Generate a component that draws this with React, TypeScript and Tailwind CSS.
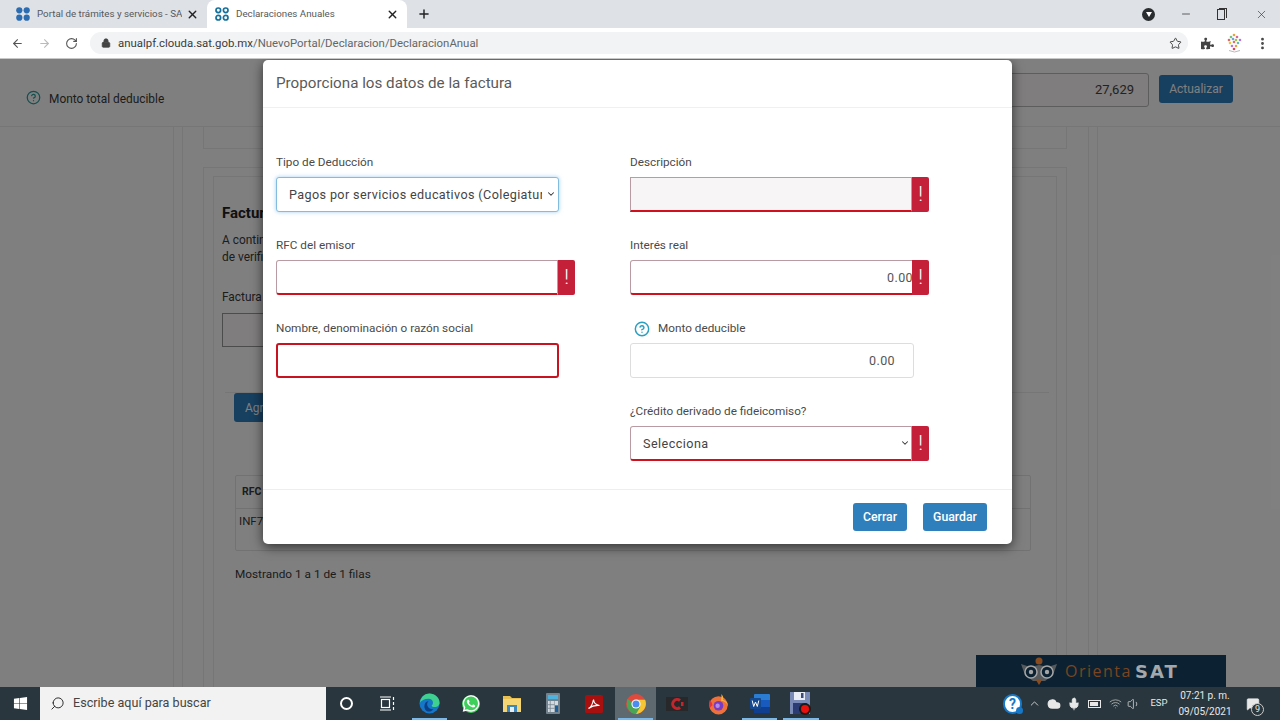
import React from 'react';
import {
  ArrowLeft,
  ArrowRight,
  ChevronDown,
  ChevronUp,
  CircleHelp,
  Cloud,
  Lock,
  MessageSquare,
  Mic,
  Minus,
  MoreVertical,
  Plus,
  RotateCw,
  Search,
  Star,
  Volume1,
  Wifi,
  X,
} from 'lucide-react';
import { FaPuzzlePiece, FaWhatsapp, FaWindows } from 'react-icons/fa';

const SatFavicon = ({ ring }: { ring?: boolean }) => (
  <svg width="14" height="14" viewBox="0 0 14 14">
    {[3.3, 10.7].map((cx) =>
      [3.3, 10.7].map((cy) => (
        <circle
          key={`${cx}-${cy}`}
          cx={cx}
          cy={cy}
          r={ring ? 2.3 : 3.1}
          fill={ring ? 'none' : '#2c6cb0'}
          stroke={ring ? '#16709c' : 'none'}
          strokeWidth={ring ? 1.7 : 0}
        />
      )),
    )}
  </svg>
);

const EdgeIcon = () => (
  <svg width="21" height="21" viewBox="0 0 24 24">
    <circle cx="12" cy="12" r="11.5" fill="#1676c8" />
    <path d="M1 11C2 4 7 .5 12 .5c6 0 11.5 4.5 11.5 10.5 0 3-2.5 5-5.500 5-2 0-3.500-.7-3.500-1.500 0-1 1.500-1.300 1.500-3.500C16 8 13.500 6.500 11 6.500 6 6.500 2.500 9 1 11z" fill="#3fcf8e" />
    <path d="M10 21c-3-1-4.500-4.500-3.500-8 .6-2 2.500-3.500 4.500-3.800-1.500 1.500-2 3-1.500 5 .7 3 4 4.800 7 4.300-2 2.300-4.500 3.300-6.500 2.500z" fill="#0b3f86" />
  </svg>
);

const FolderIcon = () => (
  <svg width="20" height="19" viewBox="0 0 20 19">
    <path d="M1 2h7l2 2h9v14H1z" fill="#e9c04f" />
    <path d="M1 5h18v13H1z" fill="#f4d774" />
    <rect x="5" y="11" width="10" height="7" fill="#3f88bd" />
    <rect x="8" y="13" width="4" height="5" fill="#e6eef3" />
  </svg>
);

const CalcIcon = () => (
  <svg width="14" height="21" viewBox="0 0 14 21">
    <rect width="14" height="21" rx="1" fill="#73838d" />
    <rect x="2" y="2" width="10" height="4" fill="#4db2dd" />
    <rect x="2" y="8" width="6.500" height="11" fill="#d3dbe0" />
    <path d="M4.200 8v11M2 11.700h6.500M2 15.300h6.500" stroke="#73838d" strokeWidth="0.8" />
    <rect x="9" y="8" width="3" height="4" fill="#d3dbe0" />
    <rect x="9" y="13" width="3" height="6" fill="#1f5f99" />
  </svg>
);

const PdfIcon = () => (
  <svg width="18" height="18" viewBox="0 0 18 18">
    <rect width="18" height="18" rx="1.500" fill="#a80f0f" />
    <path d="M3.500 13.500c2-1 4-4 5-9 .3 3 2.500 5.500 6 6-4-.3-8 .7-11 3z" fill="none" stroke="#fff" strokeWidth="1.200" />
  </svg>
);

const ChromeIcon = () => (
  <svg width="20" height="20" viewBox="0 0 24 24">
    <circle cx="12" cy="12" r="12" fill="#e04a3c" />
    <path d="M12 12 1.600 6 1 12c0 6 5 12 11 12l5-7z" fill="#4aa654" />
    <path d="M12 7h11c1.600 4 1 8-1 11s-6 6-10 6l5-8.500z" fill="#f4c534" />
    <circle cx="12" cy="12" r="5.500" fill="#fff" />
    <circle cx="12" cy="12" r="4.200" fill="#4c8bf0" />
  </svg>
);

const CrapIcon = () => (
  <svg width="24" height="18" viewBox="0 0 24 18">
    <rect x="1" y="2" width="22" height="14" fill="#28282a" />
    <path d="M15 5.500A4.500 4.500 0 1 0 15 12.500" fill="none" stroke="#c2272d" strokeWidth="3" />
    <rect x="16" y="7" width="2.500" height="4" fill="#c2272d" />
  </svg>
);

const FirefoxIcon = () => (
  <svg width="21" height="22" viewBox="0 0 24 25">
    <circle cx="12" cy="14" r="10.500" fill="#f0703a" />
    <path d="M15 1c3 3 3 5 2 7 3 1 6 3 6 7-1-3-3-6-8-6 0-3 1-5 0-8z" fill="#fbb040" />
    <path d="M2 8c-1 3-1 6 0 9l3-3c0-2-1-4-3-6z" fill="#e8313f" />
    <circle cx="12" cy="14.500" r="5.500" fill="#7a3bc4" />
    <circle cx="11" cy="14.500" r="2.500" fill="#b78ae6" />
  </svg>
);

const WordIcon = () => (
  <svg width="20" height="19" viewBox="0 0 20 19">
    <rect x="4" y="0" width="16" height="19" rx="1" fill="#2b7cd3" />
    <rect x="4" y="6" width="16" height="7" fill="#185abd" />
    <rect x="4" y="13" width="16" height="6" fill="#103f91" />
    <rect x="0" y="4" width="11" height="11" rx="1" fill="#14488f" />
    <path d="M2.200 6.500 3.700 12.500 5.500 8 7.300 12.500 8.800 6.500" fill="none" stroke="#fff" strokeWidth="1" />
  </svg>
);

const RecorderIcon = () => (
  <svg width="22" height="24" viewBox="0 0 22 24">
    <rect width="20" height="22" y="0" fill="#7a8bb8" />
    <rect x="4" y="0" width="11" height="8" fill="#e9edf5" />
    <rect x="11" y="1" width="2.500" height="5" fill="#3c4a78" />
    <rect x="3" y="11" width="14" height="11" fill="#2c3c74" />
    <circle cx="15" cy="17" r="6" fill="#1a1a1a" />
    <circle cx="15" cy="17" r="4" fill="#ea1010" />
  </svg>
);

const AvatarIcon = () => (
  <svg width="17" height="20" viewBox="0 0 17 20">
    {[
      [8, 2, '#e8a33c'], [5, 4, '#7ac27a'], [11, 4, '#d96a9a'], [3, 7, '#d96a6a'], [7, 6, '#6aa6d9'],
      [10, 7, '#9ac94a'], [14, 7, '#b27ad9'], [4, 10, '#e8c83c'], [8, 9, '#e56b6b'], [12, 10, '#5cc2b8'],
      [6, 13, '#b27ad9'], [10, 13, '#e8a33c'], [8, 16, '#d9465e'],
    ].map(([cx, cy, c], i) => (
      <circle key={i} cx={cx as number} cy={cy as number} r="1.300" fill={c as string} />
    ))}
    <path d="M3 17.500q5.500 3 11 0" stroke="#bbb" fill="none" />
  </svg>
);

const OwlIcon = () => (
  <svg width="38" height="32" viewBox="0 0 38 32">
    <circle cx="19" cy="6" r="3.500" fill="#8a4c1e" />
    <path d="M1 9 10 12 19 10 28 12 37 9 33 20 25 26H13L5 20z" fill="#565a5c" />
    <circle cx="11" cy="17" r="6" fill="#0c2233" stroke="#a5a5a5" strokeWidth="1.500" />
    <circle cx="27" cy="17" r="6" fill="#0c2233" stroke="#a5a5a5" strokeWidth="1.500" />
    <circle cx="11" cy="17" r="2.200" fill="#a5a5a5" />
    <circle cx="27" cy="17" r="2.200" fill="#a5a5a5" />
    <path d="M16 25h6l-3 5z" fill="#8a4c1e" />
  </svg>
);

const ErrorBlock = () => (
  <div className="w-[17px] h-[35px] shrink-0 bg-[#c4203a] rounded-r-[2px] flex items-center justify-center text-white text-[21px] font-light leading-none">
    !
  </div>
);

const Field = ({ label, children }: { label: React.ReactNode; children: React.ReactNode }) => (
  <div className="h-[83px]">
    <div className="h-[19px] mb-[5px] flex items-center text-[11.75px] text-[#4a4a4a]">{label}</div>
    {children}
  </div>
);

const errorInput =
  'h-[35px] w-[282px] px-3 border border-[#b99ca2] border-b-2 border-b-[#d0101c] text-right text-[12.5px] tracking-[0.4px] text-[#555] outline-none';

const TaskSlot = ({ active, running, children }: { active?: boolean; running?: boolean; children: React.ReactNode }) => (
  <div className={`relative w-[41.3px] h-[33px] flex items-center justify-center ${active ? 'bg-[#5d696f]' : ''}`}>
    {children}
    {running && <div className="absolute bottom-0 left-[3px] right-[3px] h-[2px] bg-[#7cb9e8]" />}
  </div>
);

export default function App() {
  return (
    <div className="w-[1280px] h-[720px] overflow-hidden flex flex-col bg-white font-[Roboto,sans-serif]">
      {/* Tabs */}
      <div className="h-[28px] shrink-0 bg-[#dee1e6] flex pl-[8px] text-[#3c4043]">
        <div className="w-[199px] flex items-center pl-[8px] pr-[8px]">
          <SatFavicon />
          <span className="ml-[7px] w-[145px] overflow-hidden whitespace-nowrap text-[9.75px] text-[#55585c]">Portal de trámites y servicios - SAT</span>
          <X className="ml-auto w-[13px] h-[13px] text-[#222]" strokeWidth={2.5} />
        </div>
        <div className="w-[200px] bg-white rounded-t-lg flex items-center pl-[8px] pr-[8px]">
          <SatFavicon ring />
          <span className="ml-[7px] text-[9.75px] text-[#55585c]">Declaraciones Anuales</span>
          <X className="ml-auto w-[13px] h-[13px] text-[#222]" strokeWidth={2.5} />
        </div>
        <div className="ml-[10px] flex items-center">
          <Plus className="w-[14px] h-[14px] text-[#222]" strokeWidth={2.5} />
        </div>
        <div className="ml-auto flex items-center pr-[12px]">
          <div className="w-[13px] h-[13px] rounded-full bg-[#2a2d30] flex items-center justify-center mr-[25px]">
            <div className="w-0 h-0 border-x-[3.5px] border-x-transparent border-t-[5px] border-t-white" />
          </div>
          <Minus className="w-[12px] h-[12px] text-[#333] mr-[25px]" strokeWidth={1.5} />
          <div className="relative w-[8px] h-[11px] border border-[#333] mr-[30px]">
            <div className="absolute -top-[2px] left-[1px] w-[8px] h-[10px] border-t border-r border-[#333]" />
          </div>
          <X className="w-[13px] h-[13px] text-[#333]" strokeWidth={1.2} />
        </div>
      </div>

      {/* Toolbar */}
      <div className="h-[31px] shrink-0 bg-white border-b border-[#c8c8c8] flex items-center text-[#5f6368]">
        <ArrowLeft className="ml-[11px] w-[13px] h-[13px] text-[#555]" strokeWidth={2} />
        <ArrowRight className="ml-[14px] w-[13px] h-[13px] text-[#bbb]" strokeWidth={2} />
        <RotateCw className="ml-[14px] w-[13px] h-[13px] text-[#555]" strokeWidth={2} />
        <div className="ml-[12px] w-[1098px] h-[22px] rounded-full bg-[#f1f3f4] flex items-center pl-[11px] pr-[6px]">
          <Lock className="w-[10px] h-[10px] text-[#444]" fill="#444" strokeWidth={2} />
          <span className="ml-[7px] pt-[2px] text-[11.4px] text-[#3a3b3d]">anualpf.clouda.sat.gob.mx<span className="text-[#666]">/NuevoPortal/Declaracion/DeclaracionAnual</span></span>
          <Star className="ml-auto w-[13px] h-[13px] text-[#444]" strokeWidth={1.8} />
        </div>
        <FaPuzzlePiece className="ml-[13px] w-[13px] h-[13px] text-[#444]" />
        <div className="ml-[12px]"><AvatarIcon /></div>
        <MoreVertical className="ml-[12px] w-[15px] h-[15px] text-[#444]" strokeWidth={2.5} />
      </div>

      {/* Page below the modal */}
      <div className="relative flex-1 min-h-0 overflow-hidden bg-white text-[#3a3a3a]">
        <div className="h-[68px] border-b border-[#ececec] flex items-start pl-[26px] pr-[47px] pt-[14px] relative z-10 bg-white">
          <CircleHelp className="mt-[17px] w-[15px] h-[15px] text-[#2a9d9d]" />
          <span className="mt-[18px] ml-[8px] text-[11.9px]">Monto total deducible</span>
          <div className="ml-auto w-[600px] h-[34px] border border-[#bbb] rounded-[3px] flex items-center justify-end px-[14px] bg-[#fffafa] text-[13px] text-[#444]">27,629</div>
          <button className="ml-[10px] mt-[2px] w-[74px] h-[28px] rounded-[3px] bg-[#2f7fc0] text-white text-[12px]">Actualizar</button>
        </div>

        <div className="ml-[173px] mr-[182px] h-full border-x border-[#ececec]">
          <div className="mx-[8px] h-full border-x border-[#ececec]">
            <div className="ml-[20px] mr-[21px] h-[22px] border-x border-b border-[#ececec]" />
            <div className="ml-[20px] mr-[21px] mt-[18px] h-full border-x border-t border-[#ececec] pt-[8px] px-[9px]">
              <div className="h-full border-x border-t border-[#ececec] pl-[8px]">
                <h3 className="mt-[26px] h-[20px] text-[15px] font-bold leading-[20px] text-[#222]">Facturas de gastos</h3>
                <p className="mt-[9px] text-[11.9px] leading-[17px]">
                  A continuación se muestran tus facturas
                  <br />
                  de verificación
                </p>
                <div className="mt-[22px] h-[18px] text-[11.9px] leading-[18px]">Factura</div>
                <div className="mt-[7px] w-[400px] h-[34px] border border-[#999] bg-[#fffafa]" />
                <div className="mt-[45px] ml-[3px] mr-[7px] border-t border-[#ececec]" />
                <button className="ml-[12px] w-[80px] h-[29px] rounded-[3px] bg-[#2f7fc0] text-white text-[12px] text-left pl-[11px]">Agregar</button>
                <div className="mt-[53px] ml-[13px] w-[796px] border border-[#e4e4e4] rounded-[2px] text-[11.5px]">
                  <div className="h-[33px] border-b border-[#e4e4e4] flex items-center pl-[6px] font-bold text-[10.5px]">RFC</div>
                  <div className="h-[41px] pt-[4px] pl-[3px]">INF7</div>
                </div>
                <div className="mt-[14px] ml-[13px] text-[11.8px] leading-[18px]">Mostrando 1 a 1 de 1 filas</div>
              </div>
            </div>
          </div>
        </div>

        {/* Backdrop */}
        <div className="absolute inset-0 z-20 bg-black/50" />

        {/* Banner */}
        <div className="absolute z-20 left-[976px] bottom-0 w-[250px] h-[32px] bg-[#0c2233] flex items-center pl-[44px]">
          <OwlIcon />
          <span className="ml-[7px] text-[16px] tracking-[1.5px] text-[#7a4520] font-['Open_Sans',sans-serif]">Orienta</span>
          <span className="ml-[3px] text-[18px] tracking-[2px] font-black text-[#a5a8aa] font-['DejaVu_Sans',sans-serif]">SAT</span>
        </div>

        {/* Modal */}
        <div className="absolute z-30 left-[263px] top-px w-[749px] h-[484px] bg-white rounded-[5px] shadow-[0_3px_12px_rgba(0,0,0,0.6)] flex flex-col">
          <div className="h-[48px] shrink-0 border-b border-[#f0f0f0] flex items-center px-[13px] text-[15.2px] text-[#5a5a5a]">
            Proporciona los datos de la factura
          </div>
          <div className="flex-1 flex pl-[13px] pt-[45px]">
            <div className="w-[354px]">
              <Field label="Tipo de Deducción">
                <div className="relative w-[283px]">
                  <select className="appearance-none w-full h-[35px] pl-[12px] pr-[16px] pt-[2px] border border-[#82bde0] rounded-[3px] shadow-[0_0_4px_rgba(102,175,233,0.6)] bg-white text-[12.6px] tracking-[0.38px] text-[#444] outline-none">
                    <option>Pagos por servicios educativos (Colegiaturas)</option>
                  </select>
                  <ChevronDown className="absolute right-[3px] top-[12px] w-[10px] h-[10px] text-[#333]" strokeWidth={2.5} />
                </div>
              </Field>
              <Field label="RFC del emisor">
                <div className="flex">
                  <input readOnly className={`${errorInput} rounded-l-[3px]`} />
                  <ErrorBlock />
                </div>
              </Field>
              <Field label="Nombre, denominación o razón social">
                <input readOnly className="w-[283px] h-[35px] border-2 border-[#c81420] rounded-[3px] outline-none" />
              </Field>
            </div>
            <div className="w-[380px]">
              <Field label="Descripción">
                <div className="flex">
                  <input readOnly className={`${errorInput} bg-[#f8f5f6]`} />
                  <ErrorBlock />
                </div>
              </Field>
              <Field label="Interés real">
                <div className="flex">
                  <input readOnly value="0.00" className="h-[35px] w-[284px] -mr-[2px] pl-3 pr-0 border border-[#b99ca2] border-b-2 border-b-[#d0101c] rounded-l-[3px] text-right text-[12.5px] tracking-[0.4px] text-[#555] outline-none" />
                  <ErrorBlock />
                </div>
              </Field>
              <Field
                label={
                  <>
                    <CircleHelp className="ml-[4px] w-[16px] h-[16px] text-[#2a9fc0]" strokeWidth={2.2} />
                    <span className="ml-[8px]">Monto deducible</span>
                  </>
                }
              >
                <input readOnly value="0.00" className="w-[284px] h-[35px] px-[18px] border border-[#ddd] rounded-[3px] text-right text-[12.5px] tracking-[0.4px] text-[#555] outline-none" />
              </Field>
              <Field label="¿Crédito derivado de fideicomiso?">
                <div className="flex">
                  <div className="relative w-[282px]">
                    <select className="appearance-none w-full h-[35px] pl-[12px] pt-[2px] border border-[#b99ca2] border-b-2 border-b-[#d0101c] rounded-l-[3px] bg-white text-[12.6px] tracking-[0.45px] text-[#444] outline-none">
                      <option>Selecciona</option>
                    </select>
                    <ChevronDown className="absolute right-[2px] top-[12px] w-[10px] h-[10px] text-[#333]" strokeWidth={2.5} />
                  </div>
                  <ErrorBlock />
                </div>
              </Field>
            </div>
          </div>
          <div className="h-[55px] shrink-0 border-t border-[#eee] flex items-start justify-end pt-[13px] pr-[25px] gap-[16px]">
            <button className="w-[54px] h-[28px] rounded-[3px] bg-[#2f7fbd] text-white text-[12.25px] font-medium">Cerrar</button>
            <button className="w-[64px] h-[28px] rounded-[3px] bg-[#2f7fbd] text-white text-[12.25px] font-medium">Guardar</button>
          </div>
        </div>
      </div>

      {/* Taskbar */}
      <div className="h-[33px] shrink-0 bg-[#29363d] flex items-center text-white">
        <div className="w-[40px] flex justify-center"><FaWindows className="w-[15px] h-[15px]" /></div>
        <div className="w-[286px] h-[33px] bg-[#f2f2f2] flex items-center pl-[10px] text-[#444]">
          <Search className="w-[15px] h-[15px] -scale-x-100 text-[#222]" strokeWidth={1.5} />
          <span className="ml-[8px] text-[12.6px]">Escribe aquí para buscar</span>
        </div>
        <TaskSlot><div className="w-[13px] h-[13px] rounded-full border-2 border-white" /></TaskSlot>
        <TaskSlot>
          <svg width="15" height="15" viewBox="0 0 15 15" fill="none" stroke="#fff" strokeWidth="1.200">
            <rect x="1.500" y="3.500" width="8" height="8" />
            <path d="M0 1h11M0 14h11M13.500 1v3M13.500 6v3M13.500 11v3" />
          </svg>
        </TaskSlot>
        <TaskSlot running><EdgeIcon /></TaskSlot>
        <TaskSlot>
          <div className="w-[18px] h-[18px] rounded-full bg-[#3ecf5a] flex items-center justify-center"><FaWhatsapp className="w-[19px] h-[19px] text-white" /></div>
        </TaskSlot>
        <TaskSlot><FolderIcon /></TaskSlot>
        <TaskSlot><CalcIcon /></TaskSlot>
        <TaskSlot><PdfIcon /></TaskSlot>
        <TaskSlot active running><ChromeIcon /></TaskSlot>
        <TaskSlot><CrapIcon /></TaskSlot>
        <TaskSlot><FirefoxIcon /></TaskSlot>
        <TaskSlot running><WordIcon /></TaskSlot>
        <TaskSlot running><RecorderIcon /></TaskSlot>

        <div className="ml-auto flex items-center h-[33px] text-[#e8e8e8] pr-[8px]">
          <div className="relative w-[23px] flex justify-center">
            <div className="w-[19px] h-[20px] rounded-full bg-white border-2 border-[#1878c8] flex items-center justify-center text-[#1878c8] text-[14px] font-bold leading-none">?</div>
            <div className="absolute right-[1px] bottom-0 w-[7px] h-[7px] rounded-full bg-[#1878c8]" />
          </div>
          <div className="w-[20px] flex justify-center"><ChevronUp className="w-[13px] h-[13px]" strokeWidth={1.5} /></div>
          <div className="w-[20px] flex justify-center"><Cloud className="w-[14px] h-[14px]" fill="#e8e8e8" /></div>
          <div className="w-[20px] flex justify-center"><Mic className="w-[14px] h-[16px]" fill="#e8e8e8" strokeWidth={1.5} /></div>
          <div className="w-[21px] flex justify-center">
            <div className="relative w-[13px] h-[8px] border border-[#e8e8e8]"><div className="absolute inset-[1px] right-[2px] bg-[#e8e8e8]" /></div>
          </div>
          <div className="w-[20px] flex justify-center"><Wifi className="w-[13px] h-[13px] text-[#bbb]" strokeWidth={1.5} /></div>
          <div className="w-[17px] flex justify-center"><Volume1 className="w-[14px] h-[14px]" strokeWidth={1.2} /></div>
          <div className="w-[34px] text-center text-[9.5px]">ESP</div>
          <div className="w-[58px] text-center text-[10px] leading-[16px]">
            <div>07:21 p. m.</div>
            <div>09/05/2021</div>
          </div>
          <div className="relative w-[38px] flex justify-center">
            <MessageSquare className="w-[14px] h-[14px]" fill="#e8e8e8" strokeWidth={1} />
            <div className="absolute left-[17px] top-[6px] w-[13px] h-[13px] rounded-full border border-[#ccc] bg-[#29363d] text-[9px] leading-[11px] text-center">9</div>
          </div>
        </div>
      </div>
    </div>
  );
}
